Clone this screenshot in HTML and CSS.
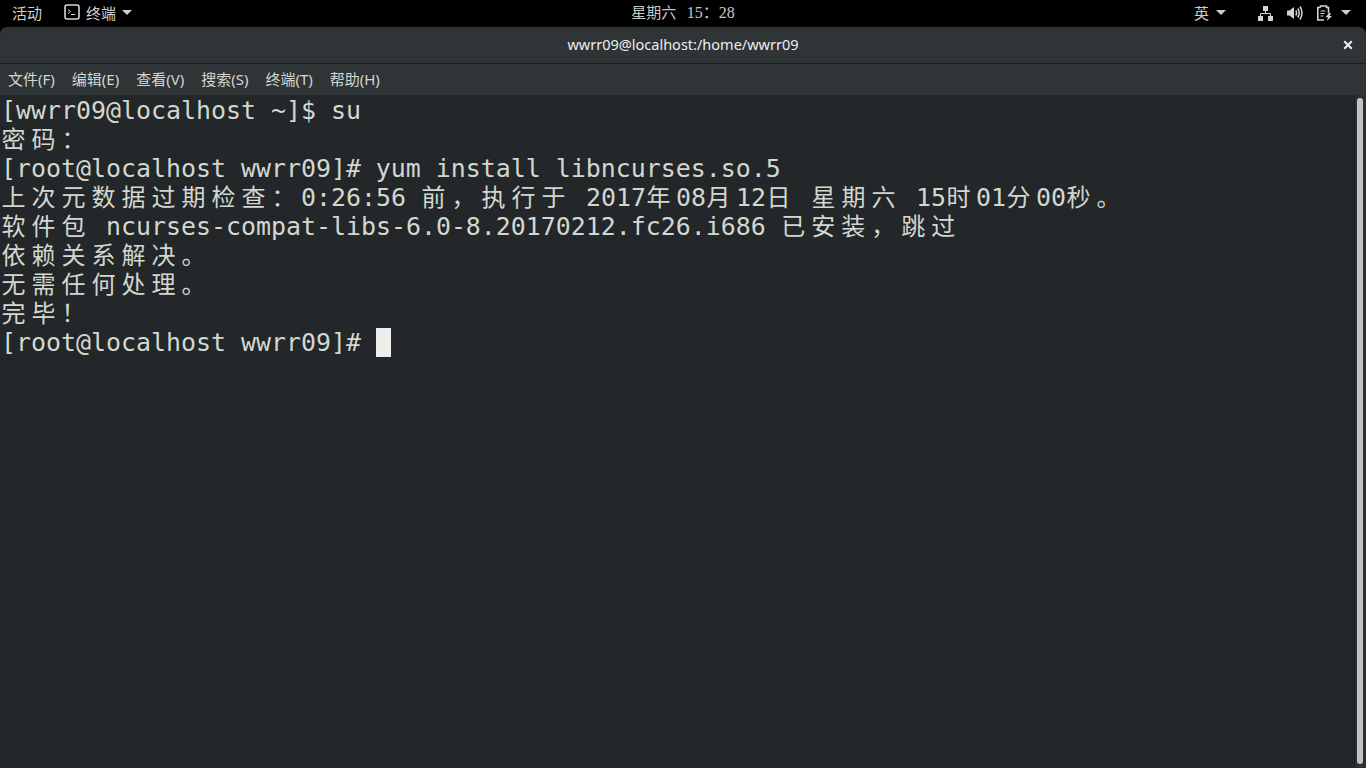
FILE: index.html
```html
<!DOCTYPE html>
<html lang="zh-CN">
<head>
<meta charset="utf-8">
<title>wwrr09@localhost:/home/wwrr09</title>
<link rel="stylesheet" href="styles.css">
</head>
<body>
<header class="topbar">
  <div class="top-left">
    <span class="activities">活动</span>
    <span class="app">
      <svg class="app-icon" width="16" height="16" viewBox="0 0 16 16"><rect x="1" y="1" width="14" height="14" rx="2" fill="none" stroke="#d4d4d4" stroke-width="1.6"/><path d="M4 5.500 6.500 7.500 4 9.500" fill="none" stroke="#d4d4d4"/><path d="M7 10.500h4" stroke="#d4d4d4"/></svg>
      <span>终端</span>
      <i class="caret"></i>
    </span>
  </div>
  <div class="clock">星期六 <span class="clock-num">15：28</span></div>
  <div class="top-right">
    <span class="lang">英</span><i class="caret lang-caret"></i>
    <svg class="tray net" width="16" height="16" viewBox="0 0 16 16"><path d="M5 0h5v5H5zM0 10h5v5H0zM10 10h5v5h-5z" fill="#d4d4d4"/><path d="M7.500 5v2.500M2.500 10V7.500h10V10" fill="none" stroke="#d4d4d4"/></svg>
    <svg class="tray vol" width="16" height="16" viewBox="0 0 16 16"><path d="M0 5.500h2.500L7 2v12l-4.500-3.500H0z" fill="#d4d4d4"/><path d="M8.800 5.500q1.500 2.500 0 5M10.800 3.500q2.800 4.500 0 9M13 1.500q4 6.500 0 13" fill="none" stroke="#d4d4d4" stroke-width="1.500"/></svg>
    <svg class="tray bat" width="16" height="16" viewBox="0 0 16 16"><path d="M3.500 2.500V1h6v1.500h2V8M7 15H.8V2.500h2.700" fill="none" stroke="#d4d4d4" stroke-width="1.600"/><path d="M3.500 6h5M3.500 8.500h4M3.500 11h3" stroke="#d4d4d4" stroke-width="1.200"/><path d="M12 8 8.500 12.300h2.500L9.800 16 15 11h-2.500l1.500-3z" fill="#d4d4d4"/></svg>
    <i class="caret"></i>
  </div>
</header>
<main class="window">
  <div class="titlebar">
    <span class="title">wwrr09@localhost:/home/wwrr09</span>
    <svg class="close" width="10" height="10" viewBox="0 0 10 10"><path d="M1.200 1.200 8.800 8.800M8.800 1.200 1.200 8.800" stroke="#eeeeec" stroke-width="2"/></svg>
  </div>
  <nav class="menubar">
    <span>文件(F)</span><span>编辑(E)</span><span>查看(V)</span><span>搜索(S)</span><span>终端(T)</span><span>帮助(H)</span>
  </nav>
  <div class="term">
    <div class="screen">
      <div class="row">[wwrr09@localhost ~]$ su</div>
      <div class="row"><span class="c">密码：</span></div>
      <div class="row">[root@localhost wwrr09]# yum install libncurses.so.5</div>
      <div class="row"><span class="c">上次元数据过期检查：</span>0:26:56 <span class="c">前，执行于</span> 2017<span class="c">年</span>08<span class="c">月</span>12<span class="c">日</span> <span class="c">星期六</span> 15<span class="c">时</span>01<span class="c">分</span>00<span class="c">秒。</span></div>
      <div class="row"><span class="c">软件包</span> ncurses-compat-libs-6.0-8.20170212.fc26.i686 <span class="c">已安装，跳过</span></div>
      <div class="row"><span class="c">依赖关系解决。</span></div>
      <div class="row"><span class="c">无需任何处理。</span></div>
      <div class="row"><span class="c">完毕！</span></div>
      <div class="row">[root@localhost wwrr09]# <i class="cursor"></i></div>
    </div>
    <div class="scrollbar"><div class="thumb"></div></div>
  </div>
</main>
</body>
</html>
```
FILE: styles.css
```css
* { box-sizing: border-box; }
html, body { margin: 0; height: 100%; overflow: hidden; background: #000; }
body { display: flex; flex-direction: column; width: 1366px; height: 768px; }

.topbar {
  flex: none; height: 27px; padding-bottom: 3px; background: #000; color: #cfcfcf;
  display: grid; grid-template-columns: 1fr auto 1fr; align-items: center;
  font: 15px/1 "Noto Sans CJK SC", sans-serif;
}
.top-left { display: flex; align-items: center; padding-left: 12px; }
.activities { margin-right: 22px; }
.app { display: flex; align-items: center; gap: 6px; }
.caret {
  display: inline-block; width: 0; height: 0;
  border: 5px solid transparent; border-top: 5px solid #cfcfcf; border-bottom: 0;
}
.clock { color: #c8c8c8; word-spacing: 7px; }
.clock-num { font: 16px/1 "Liberation Serif", "Noto Sans CJK TC", serif; }
.top-right { display: flex; align-items: center; justify-content: flex-end; padding-right: 15px; }
.lang-caret { margin: 0 32px 0 7px; }
.tray { margin-right: 12px; }
.net { margin-top: 4px; margin-right: 13px; }
.vol { margin-top: 2px; margin-right: 14px; }
.bat { margin-top: 2px; margin-right: 8px; }

.window { flex: 1; display: flex; flex-direction: column; background: #2f3437; border-radius: 7px 7px 0 0; min-height: 0; }
.titlebar {
  flex: none; height: 37px; padding-bottom: 2px; display: flex; align-items: center; justify-content: center; position: relative;
  border-bottom: 1px solid #1b1f20; color: #eeeeec;
  font: 14.5px "Noto Sans", "Noto Sans CJK SC", sans-serif;
}
.close { position: absolute; right: 13px; top: 13px; }
.menubar {
  flex: none; height: 31px; padding-bottom: 2px; display: flex; align-items: center; gap: 17px; padding-left: 8px;
  color: #d3d7cf; font: 15px "Noto Sans", "Noto Sans CJK SC", sans-serif;
}
.term { flex: 1; display: flex; background: #232729; min-height: 0; }
.screen {
  flex: 1; padding: 1px 0 0 1px; color: #d3d7cf;
  font: 24.92px/29px "DejaVu Sans Mono", "Noto Sans CJK SC", monospace;
}
.row { height: 29px; white-space: pre; }
.c { font-family: "Noto Sans CJK SC", sans-serif; font-size: 24px; line-height: 1; letter-spacing: 6px; padding-left: 0.5px; margin-right: -0.5px; }
.cursor { display: inline-block; width: 15px; height: 29px; background: #eeeeec; vertical-align: top; }
.scrollbar { flex: none; width: 12px; background: #2b3033; padding: 3px 3px 4px 2px; border-left: 1px solid #1b1f20; }
.thumb { height: 100%; background: #c2c4c4; border-radius: 4px; }
```
